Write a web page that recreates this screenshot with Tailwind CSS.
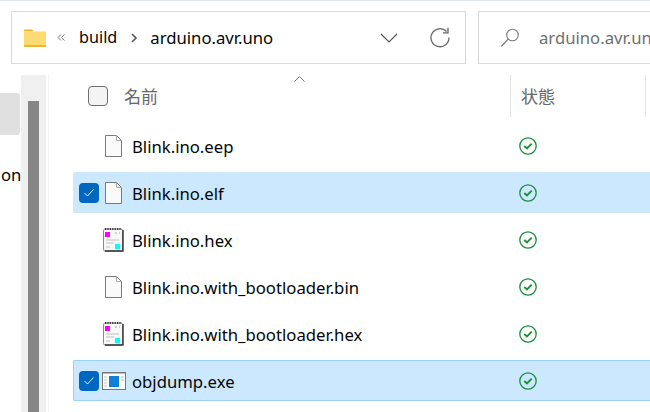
<!DOCTYPE html>
<html>
<head>
<meta charset="utf-8">
<script src="https://cdn.jsdelivr.net/npm/@tailwindcss/browser@4"></script>
</head>
<body class="m-0">
<div class="w-[650px] h-[412px] overflow-hidden bg-white flex flex-col font-['Noto_Sans','Noto_Sans_CJK_JP',sans-serif] text-[16.7px] text-[#050505] border-t border-t-[#dfe7ee]">
  <!-- toolbar -->
  <div class="h-[74px] shrink-0 flex gap-3 pl-[11px] pt-[10px]">
    <div class="w-[455px] h-[53px] border border-[#d9d9d9] flex items-center pl-[12px] pr-[15px]">
      <svg class="w-[22px] h-[18px] shrink-0" viewBox="0 0 22 18">
        <path d="M0 1.5 a1 1 0 0 1 1-1 h7 l2 2 h-10z" fill="#e9b42f"/>
        <path d="M0 2.5 h22 v14.5 a1 1 0 0 1-1 1 H1 a1 1 0 0 1-1-1z" fill="#fcdc72"/>
        <path d="M0 16 h22 v1 a1 1 0 0 1-1 1 H1 a1 1 0 0 1-1-1z" fill="#eeb52f"/>
      </svg>
      <svg class="w-[8px] h-[7px] ml-[11px] shrink-0" viewBox="0 0 8 7" fill="none" stroke="#777" stroke-width="1"><path d="M4 .5 1 3.5l3 3M7.5.5l-3 3 3 3"/></svg>
      <span class="ml-[14px] text-[16.2px]">build</span>
      <svg class="w-[7px] h-[10px] ml-[14px] shrink-0" viewBox="0 0 7 10" fill="none" stroke="#555" stroke-width="1.6"><path d="M1 1l4 4-4 4"/></svg>
      <span class="ml-[12px]">arduino.avr.uno</span>
      <svg class="w-[18px] h-[10px] ml-auto shrink-0" viewBox="0 0 18 10" fill="none" stroke="#555" stroke-width="1.1"><path d="M1 1l8 8 8-8"/></svg>
      <svg class="w-[21px] h-[21px] ml-[31px] -mt-[1px] shrink-0" viewBox="0 0 21 21" fill="none" stroke="#666" stroke-width="1.3"><path d="M17.5 4.5a9 9 0 1 0 2.5 6M19 .8v5h-5"/></svg>
    </div>
    <div class="flex-1 h-[53px] border border-[#d9d9d9] border-r-0 flex items-center pl-[21px] overflow-hidden">
      <svg class="w-[20px] h-[20px] shrink-0" viewBox="0 0 20 20" fill="none" stroke="#777" stroke-width="1.1"><circle cx="12.5" cy="7" r="5.8"/><path d="M8.3 11 1.2 18.5"/></svg>
      <span class="ml-[19px] text-[#6f6f6f] whitespace-nowrap">arduino.avr.uno</span>
    </div>
  </div>
  <!-- body -->
  <div class="flex-1 flex min-h-0">
    <!-- nav pane -->
    <div class="w-[21px] shrink-0 flex flex-col">
      <div class="h-[18px]"></div>
      <div class="h-[42px] bg-[#e0e0e0] rounded-tr-[3px] rounded-br-[3px] mr-[1px]"></div>
      <div class="mt-[26px] leading-[28px] pl-[1px]">on</div>
    </div>
    <!-- scrollbar -->
    <div class="w-[25px] shrink-0 bg-[#f0f0f0] flex justify-center">
      <div class="w-[11px] mt-[26px] bg-[#868686] self-stretch"></div>
    </div>
    <div class="w-[3px] shrink-0 border-r border-r-[#f2f2f2]"></div>
    <!-- list -->
    <div class="flex-1 min-w-0 relative pl-[24px]">
      <svg class="absolute left-[245px] top-[1px] w-[11px] h-[6px]" viewBox="0 0 11 6" fill="none" stroke="#777"><path d="M.5 5.5l5-5 5 5"/></svg>
      <!-- header -->
      <div class="h-[42px] flex text-[#666]">
        <div class="w-[437px] flex items-center pl-[15px]">
          <div class="w-[20px] h-[20px] rounded-[4px] border border-[#6e6e6e] bg-[#f4f4f4]"></div>
          <span class="ml-[16px] pt-[2px] text-[17px]">名前</span>
        </div>
        <div class="w-[135px] border-l border-[#e5e5e5] flex items-center pl-[10px]"><span class="pt-[2px] text-[17px]">状態</span></div>
        <div class="border-l border-[#e5e5e5] flex-1"></div>
      </div>
      <!-- rows -->
      <div class="flex flex-col gap-[6px] pt-[8px]">
        <div class="h-[41px] flex items-center">
          <div class="w-[59px] flex justify-end pr-[10px]"><svg class="w-[17px] h-[22px]" viewBox="0 0 17 22" fill="#fafafa" stroke="#7a7a7a"><path d="M.5.5h11l5 5v16H.5z"/><path d="M11.5.5v5h5" fill="none" stroke="#aaa"/></svg></div>
          <span class="w-[378px] pt-[2px]">Blink.ino.eep</span>
          <svg class="w-[18px] h-[18px] ml-[9px]" viewBox="0 0 18 18" fill="none" stroke="#1a8f38"><circle cx="9" cy="9" r="8.2" stroke-width="1.3"/><path d="M5.3 9l2.7 2.5 4.7-4.8" stroke-width="1.9"/></svg>
        </div>
        <div class="h-[41px] flex items-center bg-[#cce8ff] rounded-l-[2px] relative">
          <div class="absolute left-[6px] top-[11px] w-[20px] h-[20px] rounded-[4px] bg-[#0067c0] flex items-center justify-center"><svg class="w-[10px] h-[8px]" viewBox="0 0 10 8" fill="none" stroke="#fff" stroke-width=".9"><path d="M.5 4l3 3 6-6.5"/></svg></div>
          <div class="w-[59px] flex justify-end pr-[10px]"><svg class="w-[17px] h-[22px]" viewBox="0 0 17 22" fill="#fafafa" stroke="#7a7a7a"><path d="M.5.5h11l5 5v16H.5z"/><path d="M11.5.5v5h5" fill="none" stroke="#aaa"/></svg></div>
          <span class="w-[378px] pt-[2px]">Blink.ino.elf</span>
          <svg class="w-[18px] h-[18px] ml-[9px]" viewBox="0 0 18 18" fill="none" stroke="#1a8f38"><circle cx="9" cy="9" r="8.2" stroke-width="1.3"/><path d="M5.3 9l2.7 2.5 4.7-4.8" stroke-width="1.9"/></svg>
        </div>
        <div class="h-[41px] flex items-center">
          <div class="w-[59px] flex justify-end pr-[8px]"><svg class="w-[21px] h-[24px]" viewBox="0 0 21 24"><rect x="0.5" y="1" width="19" height="22" rx="1.5" fill="#f7f7f7" stroke="#8a8a8a"/><path d="M20 2v21H2" fill="none" stroke="#333" stroke-width="1.4"/><path d="M2 1h16" stroke="#333" stroke-width="2" stroke-dasharray="1.2 1.2"/><path d="M3 12h13M3 15h8M3 19h4" stroke="#d4d4d4" stroke-width="1.4"/><path d="M12 5h2M16 5h1" stroke="#aaa"/><rect x="2" y="4" width="5" height="5" fill="#ff00ff"/><rect x="12" y="16" width="5" height="5" fill="#00ffff"/></svg></div>
          <span class="w-[378px] pt-[2px]">Blink.ino.hex</span>
          <svg class="w-[18px] h-[18px] ml-[9px]" viewBox="0 0 18 18" fill="none" stroke="#1a8f38"><circle cx="9" cy="9" r="8.2" stroke-width="1.3"/><path d="M5.3 9l2.7 2.5 4.7-4.8" stroke-width="1.9"/></svg>
        </div>
        <div class="h-[41px] flex items-center">
          <div class="w-[59px] flex justify-end pr-[10px]"><svg class="w-[17px] h-[22px]" viewBox="0 0 17 22" fill="#fafafa" stroke="#7a7a7a"><path d="M.5.5h11l5 5v16H.5z"/><path d="M11.5.5v5h5" fill="none" stroke="#aaa"/></svg></div>
          <span class="w-[378px] pt-[2px]">Blink.ino.with_bootloader.bin</span>
          <svg class="w-[18px] h-[18px] ml-[9px]" viewBox="0 0 18 18" fill="none" stroke="#1a8f38"><circle cx="9" cy="9" r="8.2" stroke-width="1.3"/><path d="M5.3 9l2.7 2.5 4.7-4.8" stroke-width="1.9"/></svg>
        </div>
        <div class="h-[41px] flex items-center">
          <div class="w-[59px] flex justify-end pr-[8px]"><svg class="w-[21px] h-[24px]" viewBox="0 0 21 24"><rect x="0.5" y="1" width="19" height="22" rx="1.5" fill="#f7f7f7" stroke="#8a8a8a"/><path d="M20 2v21H2" fill="none" stroke="#333" stroke-width="1.4"/><path d="M2 1h16" stroke="#333" stroke-width="2" stroke-dasharray="1.2 1.2"/><path d="M3 12h13M3 15h8M3 19h4" stroke="#d4d4d4" stroke-width="1.4"/><path d="M12 5h2M16 5h1" stroke="#aaa"/><rect x="2" y="4" width="5" height="5" fill="#ff00ff"/><rect x="12" y="16" width="5" height="5" fill="#00ffff"/></svg></div>
          <span class="w-[378px] pt-[2px]">Blink.ino.with_bootloader.hex</span>
          <svg class="w-[18px] h-[18px] ml-[9px]" viewBox="0 0 18 18" fill="none" stroke="#1a8f38"><circle cx="9" cy="9" r="8.2" stroke-width="1.3"/><path d="M5.3 9l2.7 2.5 4.7-4.8" stroke-width="1.9"/></svg>
        </div>
        <div class="h-[41px] flex items-center bg-[#cce8ff] border border-[#99d1ff] border-r-0 rounded-l-[2px] relative">
          <div class="absolute left-[5px] top-[10px] w-[20px] h-[20px] rounded-[4px] bg-[#0067c0] flex items-center justify-center"><svg class="w-[10px] h-[8px]" viewBox="0 0 10 8" fill="none" stroke="#fff" stroke-width=".9"><path d="M.5 4l3 3 6-6.5"/></svg></div>
          <div class="w-[58px] flex justify-end pr-[6px]"><svg class="w-[24px] h-[18px]" viewBox="0 0 24 18"><rect x=".5" y=".5" width="23" height="17" fill="#fbfbfb" stroke="#777"/><path d="M1 1.5h22" stroke="#bbb" stroke-width="1"/><rect x="7" y="4" width="10" height="11" fill="#0f7fd8"/><path d="M2 5h3M2 8h3M2 11h3M2 14h3M19 5h3M19 8h3" stroke="#c4c4c4"/></svg></div>
          <span class="w-[378px] pt-[2px]">objdump.exe</span>
          <svg class="w-[18px] h-[18px] ml-[9px]" viewBox="0 0 18 18" fill="none" stroke="#1a8f38"><circle cx="9" cy="9" r="8.2" stroke-width="1.3"/><path d="M5.3 9l2.7 2.5 4.7-4.8" stroke-width="1.9"/></svg>
        </div>
      </div>
    </div>
  </div>
</div>
</body>
</html>
